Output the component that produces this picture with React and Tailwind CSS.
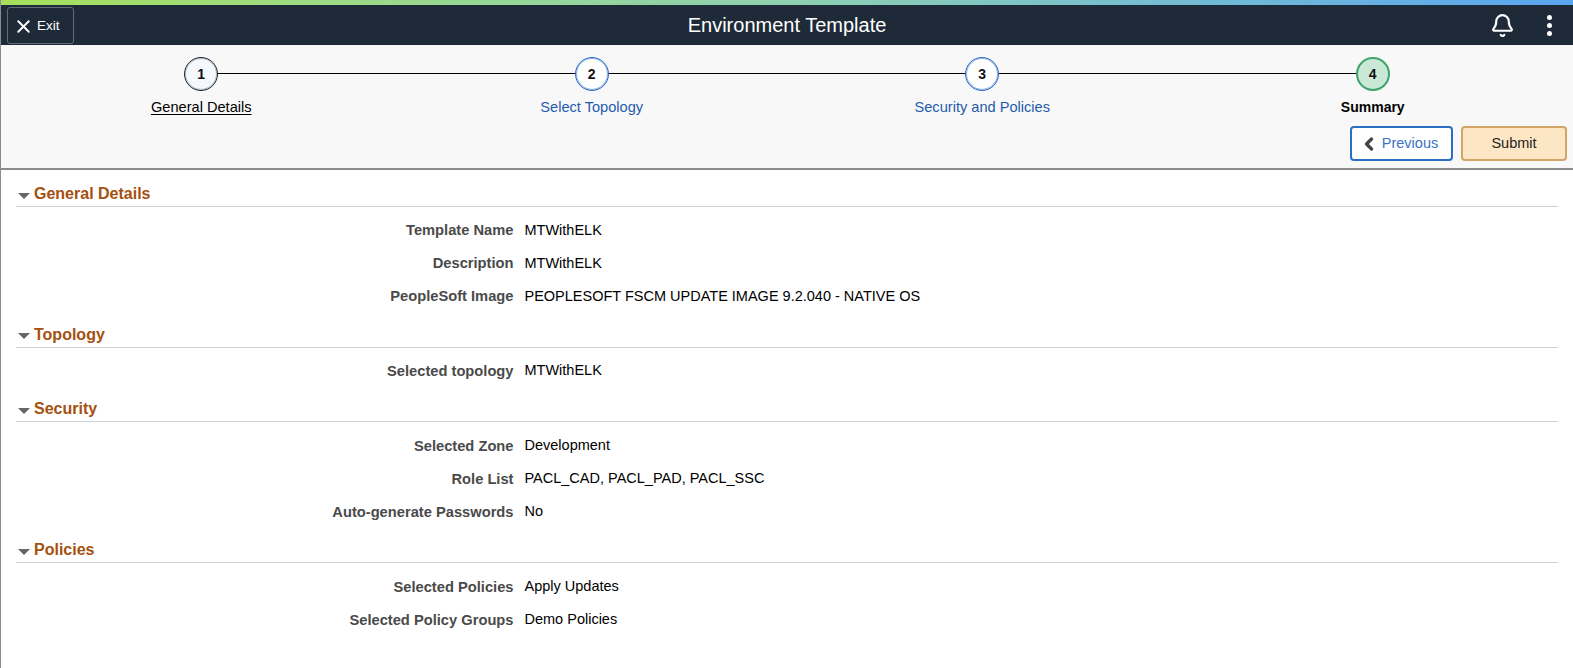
import { X, Bell, ChevronLeft } from "lucide-react";

const steps = [
  { n: 1, label: "General Details", circle: "border border-[#1e2a38] inset-ring inset-ring-[#1e2a38]/30 bg-[#f5f8fc]", text: "text-[14.6px] text-black underline underline-offset-2" },
  { n: 2, label: "Select Topology", circle: "border border-[#2a6bc9] inset-ring inset-ring-[#2a6bc9]/50 bg-white", text: "text-[14.6px] text-[#1f5cab]" },
  { n: 3, label: "Security and Policies", circle: "border border-[#2a6bc9] inset-ring inset-ring-[#2a6bc9]/50 bg-white", text: "text-[14.6px] text-[#1f5cab]" },
  { n: 4, label: "Summary", circle: "border-2 border-[#3fa36b] bg-[#c9e8d6]", text: "text-sm font-bold text-black" },
];

const sections = [
  {
    title: "General Details",
    rows: [
      ["Template Name", "MTWithELK"],
      ["Description", "MTWithELK"],
      ["PeopleSoft Image", "PEOPLESOFT FSCM UPDATE IMAGE 9.2.040 - NATIVE OS"],
    ],
  },
  { title: "Topology", rows: [["Selected topology", "MTWithELK"]] },
  {
    title: "Security",
    rows: [
      ["Selected Zone", "Development"],
      ["Role List", "PACL_CAD, PACL_PAD, PACL_SSC"],
      ["Auto-generate Passwords", "No"],
    ],
  },
  {
    title: "Policies",
    rows: [
      ["Selected Policies", "Apply Updates"],
      ["Selected Policy Groups", "Demo Policies"],
    ],
  },
];

function Header() {
  return (
    <>
      <div className="h-[5px] bg-gradient-to-r from-[#a6e05a] via-[#8fd0b0] to-[#5aa5f0]" />
      <header className="relative flex h-[40px] items-center justify-between bg-[#1e2a38] pl-[6px] pr-[21px] text-white">
        <button className="flex h-[37px] w-[67px] items-center gap-[3px] rounded-[3px] border border-[#5f6b78] pl-[5px] pt-[2px] text-[13.5px]">
          <X size={21} strokeWidth={2.2} />
          Exit
        </button>
        <h1 className="absolute left-0 right-0 text-center text-xl leading-none">Environment Template</h1>
        <div className="flex items-center gap-[32px]">
          <Bell size={25} strokeWidth={2} />
          <div className="flex flex-col gap-[3px]">
            <span className="size-[5px] rounded-full bg-white" />
            <span className="size-[5px] rounded-full bg-white" />
            <span className="size-[5px] rounded-full bg-white" />
          </div>
        </div>
      </header>
    </>
  );
}

function Train() {
  return (
    <div className="h-[125px] border-b-2 border-[#8a8d90] bg-[#f8f8f8] px-[5px] pt-[12px]">
      <div className="relative grid grid-cols-4">
        <div className="absolute left-[12.5%] right-[12.5%] top-[16px] h-px bg-black" />
        {steps.map((s) => (
          <div key={s.n} className="relative flex flex-col items-center">
            <div className={`flex size-[34px] items-center justify-center rounded-full text-sm font-bold text-[#111] ${s.circle}`}>
              {s.n}
            </div>
            <a className={`mt-[6px] leading-[20px] ${s.text}`}>{s.label}</a>
          </div>
        ))}
      </div>
      <div className="mt-[9px] mr-px flex justify-end gap-[8px]">
        <button className="flex h-[35px] w-[103px] items-center justify-center gap-[3px] rounded-[4px] border-2 border-[#2a6fc4] bg-white pr-[6px] text-[14.5px] text-[#3a72c4]">
          <ChevronLeft size={20} strokeWidth={4} className="text-[#444]" />
          Previous
        </button>
        <button className="h-[35px] w-[106px] rounded-[4px] border-2 border-[#d0a566] bg-[#fde6c4] text-[14.5px] text-[#222]">
          Submit
        </button>
      </div>
    </div>
  );
}

function Section({ title, rows }) {
  return (
    <section>
      <div className="flex h-[25px] items-center gap-[4px] border-b border-[#ccd1d6]">
        <span className="mt-[3px] ml-[2px] h-0 w-0 border-x-[6px] border-t-[6px] border-x-transparent border-t-[#666]" />
        <h2 className="text-base font-bold text-[#a5500f]">{title}</h2>
      </div>
      <div className="pt-[7px] pb-[9.7px]">
        {rows.map(([label, value]) => (
          <div key={label} className="flex h-[33px] items-center">
            <div className="w-[497.5px] text-right text-[14.7px] font-bold text-[#4a4a4a]">{label}</div>
            <div className="ml-[11px] text-[14.5px] text-black">{value}</div>
          </div>
        ))}
      </div>
    </section>
  );
}

export default function App() {
  return (
    <div className="h-[668px] overflow-hidden border-l border-[#8a8d90] bg-white font-['Liberation_Sans',Arial,sans-serif]">
      <Header />
      <Train />
      <main className="pl-[15px] pr-[15px] pt-[12px]">
        {sections.map((s) => (
          <Section key={s.title} {...s} />
        ))}
      </main>
    </div>
  );
}
